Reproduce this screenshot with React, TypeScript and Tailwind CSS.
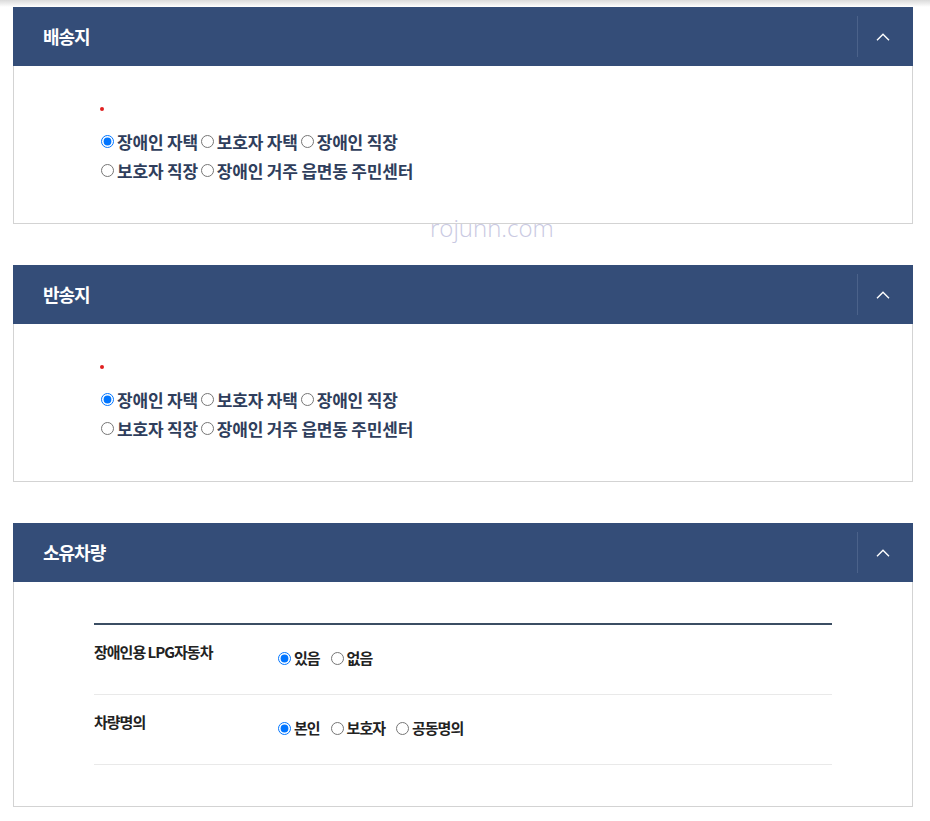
import type { ReactNode } from "react";

const KR = { fontFamily: '"Noto Sans CJK KR", "Noto Sans", sans-serif' };

function Chevron() {
  return (
    <svg width="14" height="8" viewBox="0 0 14 8" fill="none">
      <path d="M1 7.2 7 1.2l6 6" stroke="#fff" strokeWidth="1.4" />
    </svg>
  );
}

function Section({ title, children }: { title: string; children: ReactNode }) {
  return (
    <section className="w-[900px]">
      <div className="h-[59px] bg-[#344d78] flex items-center">
        <h2 className="flex-1 pl-[30px] text-white text-[18px] font-bold tracking-[-1px]">{title}</h2>
        <div className="w-px h-[41px] bg-[#4b628a]" />
        <button type="button" aria-label="접기" className="w-[55px] pr-[6px] h-full flex items-center justify-center">
          <Chevron />
        </button>
      </div>
      <div className="border border-t-0 border-[#d3d3d3] bg-white">{children}</div>
    </section>
  );
}

function Radio({ name, label, checked }: { name: string; label: string; checked?: boolean }) {
  return (
    <label className="inline-flex items-center">
      <input type="radio" name={name} defaultChecked={checked} className="w-[13px] h-[13px] mr-[3px]" />
      <span>{label}</span>
    </label>
  );
}

function PlaceForm({ name }: { name: string }) {
  return (
    <div className="pl-[86px] pt-[32px] pb-[38px]">
      <div className="h-[21px] flex items-center">
        <span className="block w-[4px] h-[4px] rounded-full bg-[#e02020]" />
      </div>
      <div className="mt-[8px] text-[17px] font-bold text-[#2f3e5c] leading-[29px] tracking-[-0.2px] w-[360px]">
        <div className="flex gap-[3px] pl-[1px]">
          <Radio name={name} label="장애인 자택" checked />
          <Radio name={name} label="보호자 자택" />
          <Radio name={name} label="장애인 직장" />
        </div>
        <div className="flex gap-[3px] pl-[1px]">
          <Radio name={name} label="보호자 직장" />
          <Radio name={name} label="장애인 거주 읍면동 주민센터" />
        </div>
      </div>
    </div>
  );
}

function Row({ label, children }: { label: string; children: ReactNode }) {
  return (
    <div className="flex h-[70px] pt-[16px] border-b border-[#e9e9e9]">
      <div className="w-[184px] text-[15px] font-bold text-[#222] tracking-[-1px] leading-[22px]">{label}</div>
      <div className="flex gap-[11px] pt-[6px] text-[15px] font-bold text-[#222] tracking-[-1px] leading-[22px] h-[28px]">
        {children}
      </div>
    </div>
  );
}

export default function App() {
  return (
    <div className="relative min-h-[821px] bg-white" style={KR}>
      <div className="h-[7px] bg-gradient-to-b from-[#dadada] to-white" />
      <div className="pl-[13px] flex flex-col gap-[41px]">
        <Section title="배송지">
          <PlaceForm name="delivery" />
        </Section>
        <Section title="반송지">
          <PlaceForm name="return" />
        </Section>
        <Section title="소유차량">
          <div className="px-[80px] pt-[41px] pb-[41px]">
            <div className="border-t-2 border-[#3b4e63]">
              <Row label="장애인용 LPG자동차">
                <Radio name="lpg" label="있음" checked />
                <Radio name="lpg" label="없음" />
              </Row>
              <Row label="차량명의">
                <Radio name="owner" label="본인" checked />
                <Radio name="owner" label="보호자" />
                <Radio name="owner" label="공동명의" />
              </Row>
            </div>
          </div>
        </Section>
      </div>
      <div
        className="absolute left-[430px] top-[210px] text-[24px] font-light text-[#c9c9e2] pointer-events-none"
        style={{ fontFamily: '"Open Sans", sans-serif' }}
      >
        rojunn.com
      </div>
    </div>
  );
}
